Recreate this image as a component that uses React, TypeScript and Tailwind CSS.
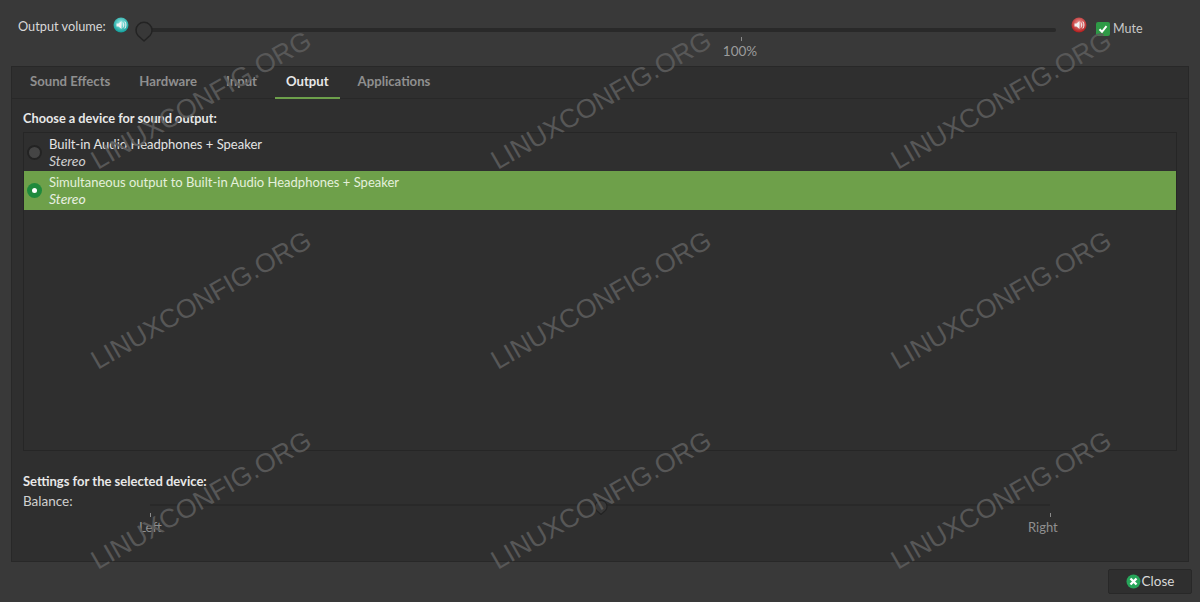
const Thumb = ({ className }: { className: string }) => (
  <svg className={className} width="20" height="24" viewBox="0 0 20 24" fill="none">
    <path d="M10 22 L4 16.5 A8 8 0 1 1 16 16.5 Z" fill="#383838" stroke="#232323" strokeWidth="1.5" strokeLinejoin="round" />
  </svg>
);

const SpeakerIcon = ({ id, from, to }: { id: string; from: string; to: string }) => (
  <svg width="16" height="16" viewBox="0 0 16 16">
    <defs>
      <radialGradient id={id} cx="50%" cy="40%" r="60%">
        <stop offset="0%" stopColor={from} />
        <stop offset="100%" stopColor={to} />
      </radialGradient>
    </defs>
    <circle cx="8" cy="8" r="7.5" fill={`url(#${id})`} />
    <path d="M3.5 6.5h2L8.5 4v8L5.5 9.5h-2z" fill="#f2f2f2" />
    <path d="M10 5.5c1 1.4 1 3.6 0 5M11.8 4.5c1.5 2 1.5 5 0 7" stroke="#f2f2f2" strokeWidth="1" fill="none" />
  </svg>
);

const Watermark = ({ left, top }: { left: number; top: number }) => (
  <span
    className="absolute w-[252px] text-center text-[26.5px] leading-[32px] whitespace-nowrap text-[#5c5c5c] [font-family:'Liberation_Sans',sans-serif] rotate-[-30deg] opacity-90"
    style={{ left, top }}
  >
    LINUXCONFIG.ORG
  </span>
);

const tabs = ["Sound Effects", "Hardware", "Input", "Output", "Applications"];
const marks = [84, 284, 484].flatMap((top) => [75, 475, 875].map((left) => ({ left, top })));

export default function App() {
  return (
    <div className="relative w-[1200px] h-[602px] overflow-hidden flex flex-col bg-[#393939] text-[#e4e4e4] text-[13px] leading-[17px] [font-family:'Lato','Open_Sans',sans-serif]">
      {/* volume row */}
      <div className="h-[66px] flex items-start pl-[18px] pr-[58px] pt-[18px]">
        <span className="w-[95px] text-[12.75px] whitespace-nowrap text-[#d8d8d8]">Output volume:</span>
        <span className="-mt-[1px]"><SpeakerIcon id="vol" from="#a0f0ec" to="#0e9c98" /></span>
        <div className="relative flex-1 ml-[17px] mr-[15px] mt-[10px] h-[4px] bg-[#292929] rounded-full">
          <Thumb className="absolute left-[-12px] top-[-9px]" />
          <span className="absolute left-[595px] top-[9px] w-px h-[4px] bg-[#8a8a8a]" />
          <span className="absolute left-[574px] top-[15px] w-[40px] text-center text-[13.5px] text-[#9c9c9c]">100%</span>
        </div>
        <span className="-mt-[1px]"><SpeakerIcon id="mute" from="#f2a0a0" to="#b01818" /></span>
        <div className="flex items-center w-[46px] ml-[9px] mt-[2px] gap-[3px] text-[12.5px] text-[#c8c8c8]">
          <span className="w-[14px] h-[14px] shrink-0 rounded-[2px] bg-[#2e9a46] flex items-center justify-center">
            <svg width="10" height="10" viewBox="0 0 10 10" fill="none">
              <path d="M1.5 5.2 L4 7.8 L8.5 2.2" stroke="#fff" strokeWidth="2" />
            </svg>
          </span>
          Mute
        </div>
      </div>

      {/* notebook */}
      <div className="mx-[11px] w-[1178px] h-[496px] flex flex-col border border-[#282828] bg-[#2f2f2f]">
        <div className="h-[32px] flex pl-[7px] border-b border-[#282828] font-bold text-[13.15px]">
          {tabs.map((t) => (
            <div
              key={t}
              className={
                t === "Output"
                  ? "px-[11px] pb-[2px] mr-[7px] flex items-center border-b-[2px] border-[#6da04b] h-[32px] text-[#e8e8e8]"
                  : "px-[11px] pb-[2px] mr-[7px] flex items-center text-[#8f8f8f]"
              }
            >
              {t}
            </div>
          ))}
        </div>
        <div className="flex-1 flex flex-col px-[11px]">
          <div className="mt-[11px] h-[22px] font-bold text-[12.75px] text-[#e8e8e8]">Choose a device for sound output:</div>
          <div className="h-[319px] border border-[#262626] flex flex-col">
            <div className="h-[38px] flex items-center pl-[3px] gap-[7px]">
              <span className="w-[15px] h-[15px] rounded-full bg-[#454545] border-2 border-[#232323]" />
              <div>
                <div className="leading-[17px] text-[#e4e4e4]">Built-in Audio Headphones + Speaker</div>
                <div className="italic text-[14px] leading-[16px] text-[#cfcfcf]">Stereo</div>
              </div>
            </div>
            <div className="h-[39px] flex items-center pl-[3px] gap-[7px] bg-[#6ea04a]">
              <span className="w-[15px] h-[15px] rounded-full bg-[#1f8a3c] flex items-center justify-center">
                <span className="w-[5px] h-[5px] rounded-full bg-white" />
              </span>
              <div>
                <div className="leading-[17px] text-[#e4f0dc]">Simultaneous output to Built-in Audio Headphones + Speaker</div>
                <div className="italic text-[14px] leading-[16px] text-[#e8efe2]">Stereo</div>
              </div>
            </div>
          </div>
          <div className="mt-[22px] h-[20px] font-bold text-[13px] text-[#e8e8e8]">Settings for the selected device:</div>
          <div className="flex items-start">
            <span className="w-[127px] text-[13.5px] text-[#d0d0d0]">Balance:</span>
            <div className="relative w-[900px] h-[2px] mt-[11px] bg-[#292929]">
              <Thumb className="absolute left-[441px] top-[-9px] scale-75" />
              <span className="absolute left-0 top-[9px] w-px h-[4px] bg-[#8a8a8a]" />
              <span className="absolute left-[900px] top-[9px] w-px h-[4px] bg-[#8a8a8a]" />
              <span className="absolute left-[-11px] top-[15px] text-[13.5px] text-[#8f8f8f]">Left</span>
              <span className="absolute left-[878px] top-[15px] text-[13px] text-[#8f8f8f]">Right</span>
            </div>
          </div>
        </div>
      </div>

      {/* footer */}
      <div className="flex-1 flex justify-end items-start pt-[7px] pr-[8px]">
        <button className="w-[84px] h-[25px] flex items-center justify-center gap-[1px] rounded-[2px] bg-[#2f2f2f] border border-[#282828] text-[#d8d8d8] text-[13.5px]">
          <svg width="15" height="15" viewBox="0 0 15 15">
            <circle cx="7.5" cy="7.5" r="7" fill="#27a55a" />
            <path d="M4.5 4.5l6 6M10.5 4.5l-6 6" stroke="#fff" strokeWidth="2.4" />
          </svg>
          Close
        </button>
      </div>

      {/* watermark overlay */}
      {marks.map((m) => (
        <Watermark key={`${m.left}-${m.top}`} left={m.left} top={m.top} />
      ))}
    </div>
  );
}
